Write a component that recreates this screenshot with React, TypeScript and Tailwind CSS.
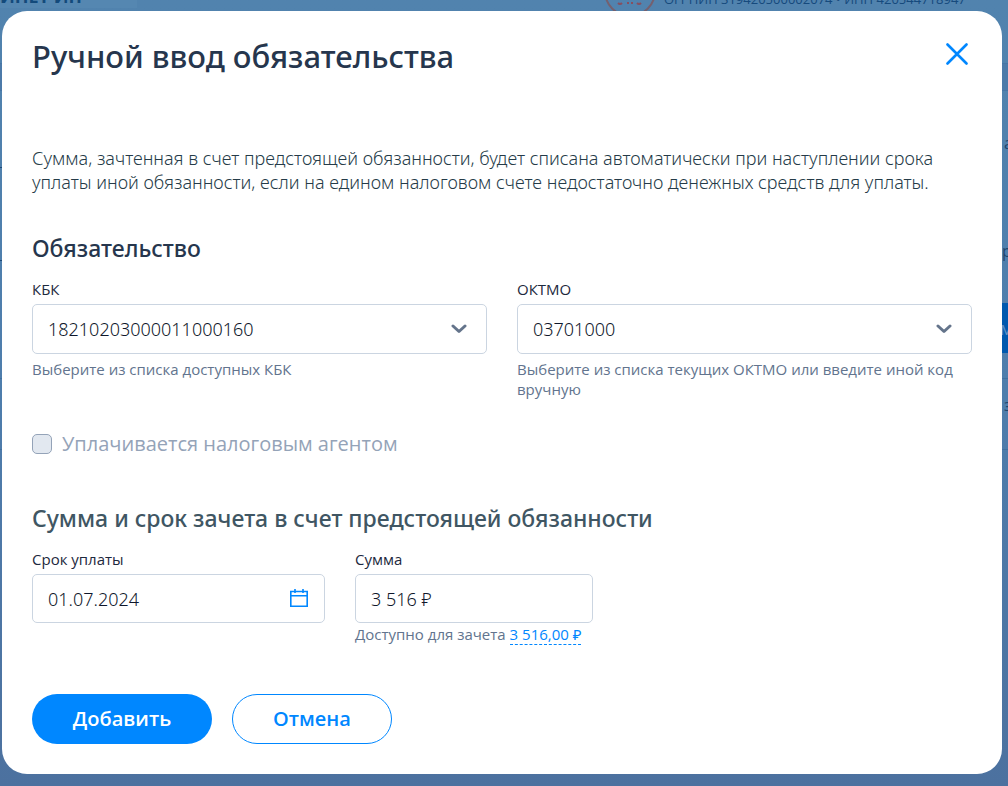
import { useState } from "react";
import type { ReactNode } from "react";

function Chevron() {
  return (
    <svg
      viewBox="0 0 16 10"
      className="pointer-events-none absolute top-5 right-5 h-[10px] w-4"
      fill="none"
      stroke="#64748b"
      strokeWidth="3"
      strokeLinecap="round"
      strokeLinejoin="round"
      aria-hidden="true"
    >
      <path d="M2 2 L8 7.5 L14 2" />
    </svg>
  );
}

function CalendarIcon() {
  return (
    <svg viewBox="0 0 20 20" className="h-5 w-5" fill="none" stroke="#0087ff" strokeWidth="1.6" aria-hidden="true">
      <path d="M1.8 3.5 H18.2 V18.2 H1.8 Z M1.8 7.8 H18.2 M6 1 V5 M14 1 V5" />
    </svg>
  );
}

function Field({ id, label, hint, className, children }: { id: string; label: string; hint?: ReactNode; className?: string; children: ReactNode }) {
  return (
    <div className={className}>
      <label htmlFor={id} className="block text-[15px] leading-5 text-slate-800">
        {label}
      </label>
      <div className="relative mt-[5px]">{children}</div>
      {hint}
    </div>
  );
}

const control =
  "block w-full appearance-none rounded-[5px] border border-[#cbd5e1] bg-white px-[15px] text-[18px] leading-6 font-['Noto_Sans',sans-serif] font-light text-slate-900 outline-none focus:border-[#0087ff]";

const hintText = "text-[15px] leading-5 text-slate-500";

function Backdrop() {
  return (
    <div
      aria-hidden="true"
      className="absolute inset-0 flex flex-col overflow-hidden bg-linear-to-b from-[#5183ae] via-[#4e7dac] to-[#4c719f] text-[#164a7d]"
    >
      <div className="flex h-[63px] items-start justify-between">
        <div className="flex h-2 w-[137px] items-end bg-[#5587b1]">
          <span className="text-[18px] leading-6 font-bold text-[#134a7b]">ИНЕТ ИП</span>
        </div>
        <div className="flex h-4 w-[404px] items-end gap-2">
          <svg viewBox="0 0 52 52" className="-mb-px h-[52px] w-[52px] shrink-0" fill="none" stroke="#75606f" strokeWidth="2">
            <circle cx="26" cy="26" r="25" />
            <path d="M14 38 q2 2 4 0 M24 37 V39 M28 37 V39 M33 38 q2 2 4 0" stroke="#864f60" />
          </svg>
          <span className="mb-[7px] text-[13px] leading-5 whitespace-nowrap">ОГРНИП 319420500002074 • ИНН 420544718947</span>
        </div>
      </div>
      <div className="h-7 border-y border-[#4675a5] bg-[#4c7aa9]" />
      <div className="flex h-[212px] justify-between text-[16px] leading-6 text-[#1f456e]">
        <div className="w-0.5 pt-[76px]">
          <div className="h-[94px] border-t border-b border-[#1c4a78]" />
        </div>
        <div className="flex flex-col items-end gap-[84px] pt-10">
          <span className="w-1 overflow-hidden">а</span>
          <span className="w-1.5 overflow-hidden">ра</span>
        </div>
      </div>
      <div className="flex h-[50px] w-2 items-center self-end overflow-hidden bg-[#0058ae] text-[18px] font-medium text-[#5c8fc5]">
        м
      </div>
      <div className="h-[26px] border-b border-[#40709f]" />
      <div className="flex h-[71px] justify-end border-b border-[#40709f] pt-3.5 text-[16px] leading-6 text-[#1f456e]">
        <span className="w-1 overflow-hidden">з</span>
      </div>
    </div>
  );
}

export default function App() {
  const [kbk, setKbk] = useState("18210203000011000160");
  const [oktmo, setOktmo] = useState("03701000");
  const [date, setDate] = useState("01.07.2024");
  const [sum, setSum] = useState("3 516 ₽");

  return (
    <div className="relative min-h-screen pt-[11px] pr-1.5 pb-3 pl-0.5 font-['Open_Sans','Noto_Sans',sans-serif]">
      <Backdrop />
      <main role="dialog" aria-labelledby="dialog-title" className="relative rounded-[25px] bg-white px-[30px] pt-[25px] pb-[30px]">
        <header className="flex items-start justify-between">
          <h1 id="dialog-title" className="font-['Noto_Sans',sans-serif] text-[31px] leading-10 font-medium text-[#26364d]">
            Ручной ввод обязательства
          </h1>
          <button type="button" aria-label="Закрыть" className="flex h-9 w-[30px] items-center justify-center">
            <svg viewBox="0 0 22 22" className="h-[22px] w-[22px]" fill="none" stroke="#0087ff" strokeWidth="2.6" strokeLinecap="round" aria-hidden="true">
              <path d="M1.5 1.5 L20.5 20.5 M20.5 1.5 L1.5 20.5" />
            </svg>
          </button>
        </header>

        <p className="mt-[70px] font-['Noto_Sans',sans-serif] text-[18px] leading-6 font-light text-[#253b48]">
          Сумма, зачтенная в счет предстоящей обязанности, будет списана автоматически при наступлении срока уплаты иной
          обязанности, если на едином налоговом счете недостаточно денежных средств для уплаты.
        </p>

        <form onSubmit={(e) => e.preventDefault()}>
          <h2 className="mt-[37px] font-['Noto_Sans',sans-serif] text-[23px] leading-[34px] font-medium text-[#26364d]">
            Обязательство
          </h2>
          <div className="mt-3.5 grid grid-cols-2 gap-[30px]">
            <Field id="kbk" label="КБК" hint={<p className={`mt-[5px] ${hintText}`}>Выберите из списка доступных КБК</p>}>
              <select id="kbk" value={kbk} onChange={(e) => setKbk(e.target.value)} className={`h-[50px] ${control}`}>
                <option>18210203000011000160</option>
              </select>
              <Chevron />
            </Field>
            <Field
              id="oktmo"
              label="ОКТМО"
              hint={<p className={`mt-[5px] ${hintText}`}>Выберите из списка текущих ОКТМО или введите иной код вручную</p>}
            >
              <select id="oktmo" value={oktmo} onChange={(e) => setOktmo(e.target.value)} className={`h-[50px] ${control}`}>
                <option>03701000</option>
              </select>
              <Chevron />
            </Field>
          </div>

          <div className="mt-[31px] flex items-center gap-2.5">
            <input
              id="agent"
              type="checkbox"
              disabled
              className="h-5 w-5 appearance-none rounded-[5px] border border-[#94a3b8] bg-[#e2e8f0]"
            />
            <label htmlFor="agent" className="text-[20px] leading-7 text-[#94a3b8]">
              Уплачивается налоговым агентом
            </label>
          </div>

          <h2 className="mt-[43px] font-['Noto_Sans',sans-serif] text-[23px] leading-[34px] font-medium text-[#405663]">
            Сумма и срок зачета в счет предстоящей обязанности
          </h2>
          <div className="mt-3.5 flex items-start gap-[30px]">
            <Field id="date" label="Срок уплаты" className="w-[293px]">
              <input id="date" type="text" value={date} onChange={(e) => setDate(e.target.value)} className={`h-[49px] ${control}`} />
              <button type="button" aria-label="Открыть календарь" className="absolute top-3.5 right-4">
                <CalendarIcon />
              </button>
            </Field>
            <Field
              id="sum"
              label="Сумма"
              className="w-[238px]"
              hint={
                <p className={`mt-px ${hintText}`}>
                  Доступно для зачета{" "}
                  <a href="#sum" className="border-b border-dashed border-[#0087ff] text-[#0087ff]">
                    3 516,00 ₽
                  </a>
                </p>
              }
            >
              <input id="sum" type="text" value={sum} onChange={(e) => setSum(e.target.value)} className={`h-[49px] ${control}`} />
            </Field>
          </div>

          <div className="mt-[50px] flex gap-5">
            <button type="submit" className="h-[50px] w-[180px] rounded-full bg-[#0087ff] text-[20px] font-semibold text-white">
              Добавить
            </button>
            <button type="button" className="h-[50px] w-40 rounded-full border border-[#0087ff] bg-white text-[20px] font-semibold text-[#0087ff]">
              Отмена
            </button>
          </div>
        </form>
      </main>
    </div>
  );
}
